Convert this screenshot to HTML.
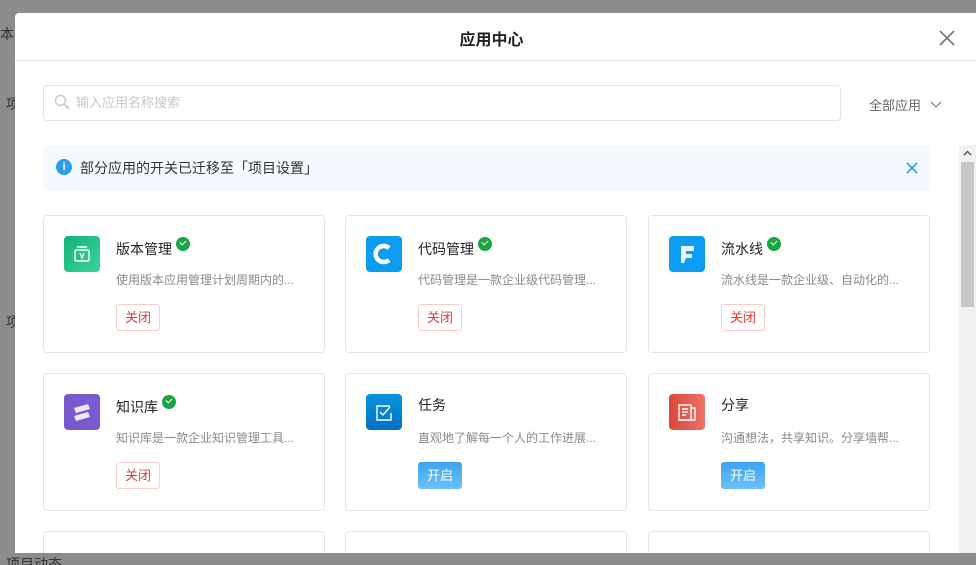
<!DOCTYPE html>
<html><head><meta charset="utf-8"><style>
*{box-sizing:border-box;margin:0;padding:0}
html,body{width:976px;height:565px;overflow:hidden}
body{background:#8c8c8c;font-family:"Liberation Sans","Noto Sans CJK SC",sans-serif;position:relative}
.wrap{position:absolute;left:0;top:0;width:976px;height:565px;overflow:hidden}
.bg{position:absolute;color:#333;font-size:14px;line-height:16px}
.modal{position:absolute;left:15px;top:13px;width:961px;height:540px;background:#fff;border-radius:4px 0 0 0;overflow:hidden}
.hd{height:48px;border-bottom:1px solid #e8e8e8;text-align:center;line-height:56px;font-size:16px;font-weight:bold;color:#222;padding-right:8px}
.close{position:absolute;left:923px;top:16px}
.search{position:absolute;left:28px;top:72px;width:798px;height:36px;border:1px solid #e3e3e3;border-radius:4px;font-size:13px;color:#c8c8c8;line-height:34px;padding-left:32px}
.search svg{position:absolute;left:10px;top:8px}
.all{position:absolute;left:854px;top:82px;font-size:13px;color:#666}
.tip{position:absolute;left:28px;top:132px;width:887px;height:46px;background:#f3f9fe;border-radius:4px;font-size:14px;color:#333;line-height:46px;padding-left:37px}
.tip .i{position:absolute;left:13px;top:14px;width:16px;height:16px;border-radius:50%;background:#2c9ef0;color:#fff;font-size:11px;line-height:16px;text-align:center;font-weight:bold}
.card{position:absolute;width:282px;height:138px;border:1px solid #e5e5e5;border-radius:4px;background:#fff}
.ic{position:absolute;left:20px;top:20px;width:36px;height:36px;border-radius:4px}
.t{position:absolute;left:72px;top:21px;font-size:14px;color:#222;white-space:nowrap;line-height:20px}
.ok{display:inline-block;width:14px;height:14px;border-radius:50%;background:#1aa543;vertical-align:3px;margin-left:4px;position:relative}
.ok:after{content:"";position:absolute;left:4px;top:3px;width:5px;height:3px;border-left:1.5px solid #fff;border-bottom:1.5px solid #fff;transform:rotate(-45deg)}
.d{position:absolute;left:72px;top:55px;font-size:12px;color:#8a8a8a;white-space:nowrap}
.b{position:absolute;left:72px;top:88px;width:44px;height:27px;border-radius:3px;font-size:13px;text-align:center;line-height:25px}
.off{border:1px solid #fcc;color:#e53935}
.on{background:linear-gradient(#3ba3f2,#6ec1f8);color:#fff;line-height:27px}
.sb{position:absolute;left:944px;top:132px;width:17px;height:408px;background:#f1f1f1}
.th{position:absolute;left:2px;top:17px;width:13px;height:145px;background:#c8c8c8}
</style></head><body><div class="wrap">
<div class="bg" style="left:0;top:26px">本</div>
<div class="bg" style="left:6px;top:96px">项</div>
<div class="bg" style="left:6px;top:314px">项</div>
<div class="bg" style="left:6px;top:556px">项目动态</div>
<div class="modal">
<div class="hd">应用中心</div>
<svg class="close" width="18" height="18" viewBox="0 0 18 18"><path d="M2 2L16 16M16 2L2 16" stroke="#777" stroke-width="1.6"/></svg>
<div class="search"><svg width="16" height="16" viewBox="0 0 16 16"><circle cx="6.5" cy="6.5" r="5" fill="none" stroke="#ccc" stroke-width="1.5"/><path d="M10 10L15 15" stroke="#ccc" stroke-width="2"/></svg>输入应用名称搜索</div>
<div class="all">全部应用 <svg width="14" height="10" viewBox="0 0 14 10" style="margin-left:4px"><path d="M2 2L7 7L12 2" fill="none" stroke="#888" stroke-width="1.3"/></svg></div>
<div class="tip"><span class="i">i</span>部分应用的开关已迁移至「项目设置」<svg style="position:absolute;left:863px;top:17px" width="12" height="12" viewBox="0 0 12 12"><path d="M1 1L11 11M11 1L1 11" stroke="#2c9ef0" stroke-width="1.6"/></svg></div>

<div class="card" style="left:28px;top:202px"><div class="ic" style="background:linear-gradient(135deg,#13b27a,#3cd39a)"><svg width="36" height="36"><rect x="11" y="14" width="14" height="11" rx="1.5" fill="none" stroke="#fff" stroke-width="1.5"/><path d="M13 11H23" stroke="#fff" stroke-width="1.5"/><path d="M16 17L18 22L20 17" fill="none" stroke="#fff" stroke-width="1.3"/></svg></div><div class="t">版本管理<span class="ok"></span></div><div class="d">使用版本应用管理计划周期内的...</div><div class="b off">关闭</div></div>
<div class="card" style="left:330px;top:202px"><div class="ic" style="background:#0e9cf0"><svg width="36" height="36"><path d="M23 12A8 8 0 1 0 23 24" fill="none" stroke="#fff" stroke-width="4.5"/></svg></div><div class="t">代码管理<span class="ok"></span></div><div class="d">代码管理是一款企业级代码管理...</div><div class="b off">关闭</div></div>
<div class="card" style="left:633px;top:202px"><div class="ic" style="background:#0e9cf0"><svg width="36" height="36"><path d="M12 10H25V15H17V18H23V22H17L15 27L12 27Z" fill="#fff" opacity=".9"/></svg></div><div class="t">流水线<span class="ok"></span></div><div class="d">流水线是一款企业级、自动化的...</div><div class="b off">关闭</div></div>

<div class="card" style="left:28px;top:360px"><div class="ic" style="background:#7a59cf"><svg width="36" height="36"><path d="M10 14L24 10L26 15L12 19Z M10 22L24 18L26 23L12 27Z" fill="#fff" opacity=".85"/></svg></div><div class="t">知识库<span class="ok"></span></div><div class="d">知识库是一款企业知识管理工具...</div><div class="b off">关闭</div></div>
<div class="card" style="left:330px;top:360px"><div class="ic" style="background:linear-gradient(#0a94de,#0470c6)"><svg width="36" height="36"><path d="M24 12H11V26H25V19" fill="none" stroke="#fff" stroke-width="1.4"/><path d="M14 18L17 21L24 13" fill="none" stroke="#fff" stroke-width="1.4"/></svg></div><div class="t">任务</div><div class="d">直观地了解每一个人的工作进展...</div><div class="b on">开启</div></div>
<div class="card" style="left:633px;top:360px"><div class="ic" style="background:linear-gradient(90deg,#d9473d,#ee7266)"><svg width="36" height="36"><rect x="10" y="11" width="12" height="15" fill="none" stroke="#fff" stroke-width="1.4"/><path d="M22 14H26V26H10M13 15H19M13 18H19M13 21H17" fill="none" stroke="#fff" stroke-width="1.4"/></svg></div><div class="t">分享</div><div class="d">沟通想法，共享知识。分享墙帮...</div><div class="b on">开启</div></div>

<div class="card" style="left:28px;top:518px;height:22px;border-bottom:none;border-radius:4px 4px 0 0"></div>
<div class="card" style="left:330px;top:518px;height:22px;border-bottom:none;border-radius:4px 4px 0 0"></div>
<div class="card" style="left:633px;top:518px;height:22px;border-bottom:none;border-radius:4px 4px 0 0"></div>
<div class="sb"><div class="th"></div><svg style="position:absolute;left:4px;top:5px" width="9" height="6"><path d="M1 5L4.5 1.5L8 5" fill="none" stroke="#555" stroke-width="1.5"/></svg></div>
</div>
</div></body></html>
